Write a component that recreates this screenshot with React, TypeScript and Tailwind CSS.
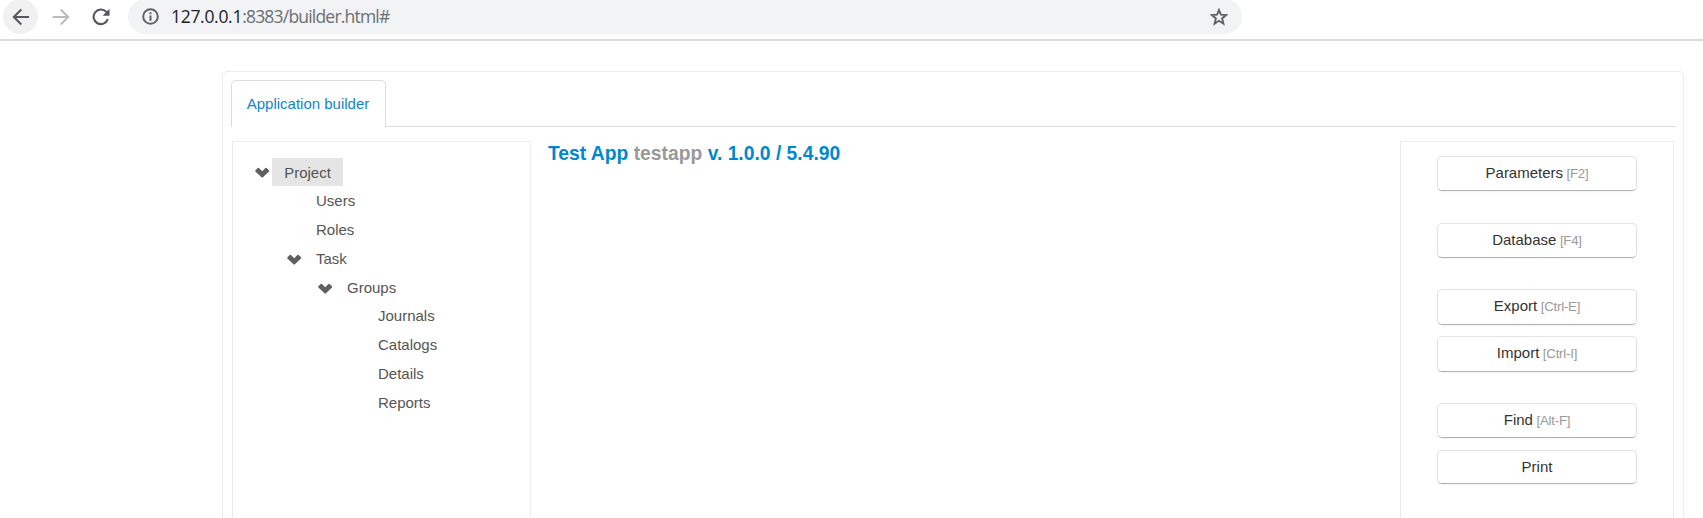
const tree = [
  { label: 'Project', indent: 'pl-[22px]', open: true, selected: true, height: 'h-7' },
  { label: 'Users', indent: 'pl-[54px]', height: 'h-[29px]' },
  { label: 'Roles', indent: 'pl-[54px]', height: 'h-[29px]' },
  { label: 'Task', indent: 'pl-[54px]', open: true, height: 'h-[29px]' },
  { label: 'Groups', indent: 'pl-[85px]', open: true, height: 'h-[29px]' },
  { label: 'Journals', indent: 'pl-[116px]', height: 'h-7 pb-0.5' },
  { label: 'Catalogs', indent: 'pl-[116px]', height: 'h-[29px]' },
  { label: 'Details', indent: 'pl-[116px]', height: 'h-[29px]' },
  { label: 'Reports', indent: 'pl-[116px]', height: 'h-[29px]' },
];

const actions = [
  { label: 'Parameters', keys: '[F2]', box: 'h-[35px]' },
  { label: 'Database', keys: '[F4]', box: 'mt-8 h-[35px]' },
  { label: 'Export', keys: '[Ctrl-E]', box: 'mt-[31px] h-9' },
  { label: 'Import', keys: '[Ctrl-I]', box: 'mt-[11px] h-9' },
  { label: 'Find', keys: '[Alt-F]', box: 'mt-[31px] h-[35px]' },
  { label: 'Print', keys: '', box: 'mt-3 h-[34px]' },
];

function Chevron() {
  return (
    <svg className="h-[11px] w-[15px]" viewBox="0 0 15 11" fill="#5f5f5f">
      <path d="M0.4 3.3L2.8 0.9Q3.4 0.5 4 0.9L7.2 4.2L10.4 0.9Q11 0.5 11.6 0.9L14 3.3Q14.4 3.9 14 4.4L7.9 10.2Q7.2 10.7 6.5 10.2L0.4 4.4Q0 3.9 0.4 3.3Z" />
    </svg>
  );
}

function BrowserBar() {
  return (
    <header className="flex h-[41px] shrink-0 items-start border-b-2 border-[#dadce0] pl-[3px]">
      <div className="-mt-px flex h-[35px] w-[35px] items-center justify-center rounded-full bg-[#f1f1f2]">
        <svg className="size-[18px]" viewBox="0 0 18 18" fill="none" stroke="#54575b" strokeWidth="2">
          <path d="M17 9H2M9.3 1.5L1.8 9L9.3 16.5" />
        </svg>
      </div>
      <svg className="ml-[14px] mt-[8px] size-[18px]" viewBox="0 0 18 18" fill="none" stroke="#babcbe" strokeWidth="2">
        <path d="M0.5 9H16M8.7 1.5L16.2 9L8.7 16.5" />
      </svg>
      <svg className="ml-[22px] mt-[8px] size-[18px]" viewBox="0 0 18 18" fill="none" stroke="#54575b" strokeWidth="2.1">
        <path d="M15.8 11.2A7.3 7.3 0 1 1 14.3 3.9L15.5 5" />
        <path d="M17.5 0.8V7.7H10.6Z" fill="#54575b" stroke="none" />
      </svg>
      <div className="-mt-px ml-[18px] flex h-[35px] w-[1114px] items-center rounded-full bg-[#f1f3f4] pl-[14px] pr-[14px]">
        <svg className="size-[17px]" viewBox="0 0 17 17" fill="none" stroke="#5f6368" strokeWidth="2">
          <circle cx="8.5" cy="8.5" r="7.3" />
          <path d="M8.5 7.5V12.7M8.5 4.3V6.3" />
        </svg>
        <div className="ml-[12px] flex-1 whitespace-nowrap pt-px font-['Open_Sans','Noto_Sans',sans-serif] text-[17.5px] leading-none tracking-[-0.8px] text-[#6b6f74]">
          <span className="tracking-[-0.3px] text-[#202124]">127.0.0.1</span>:8383/builder.html#
        </div>
        <svg className="size-[18px]" viewBox="0 0 18 18" fill="none" stroke="#5f6368" strokeWidth="1.9">
          <path d="M9 2L10.9 6.7L16 7.1L12.1 10.4L13.4 15.7L9 12.8L4.6 15.7L5.9 10.4L2 7.1L7.1 6.7Z" />
        </svg>
      </div>
    </header>
  );
}

export default function App() {
  return (
    <div className="flex h-[518px] flex-col overflow-hidden bg-white font-['Liberation_Sans',Arial,sans-serif] text-[15px]">
      <BrowserBar />
      <main className="ml-[222px] mt-[30px] flex w-[1462px] flex-1 flex-col rounded-t-[5px] border border-b-0 border-[#ececec] pl-2 pr-[7px] pt-2">
        <nav className="flex">
          <div className="flex h-[47px] w-[155px] items-center justify-center rounded-t-[5px] border border-b-0 border-[#dddddd] pr-px pt-px text-[#0f85cc]">
            Application builder
          </div>
          <div className="flex-1 border-b border-[#dddddd]" />
        </nav>
        <div className="mt-[14px] flex flex-1">
          <aside className="ml-px w-[299px] border border-b-0 border-[#ececec] pl-[17px] pt-4 text-[#555555]">
            {tree.map((n) => (
              <div key={n.label} className={`flex items-center ${n.indent} ${n.height}`}>
                {n.open ? (
                  <span className="-ml-[17px] w-[17px] pt-px">
                    <Chevron />
                  </span>
                ) : null}
                <span className={n.selected ? 'flex h-7 w-[71px] items-center justify-center bg-[#e5e5e5] pt-0.5' : 'pl-[12px] pt-0.5'}>
                  {n.label}
                </span>
              </div>
            ))}
          </aside>
          <section className="flex-1 pl-[17px]">
            <h1 className="text-[19.3px] font-bold leading-[25px] text-[#0088cc]">
              Test App <span className="text-[#999999]">testapp</span> v. 1.0.0 / 5.4.90
            </h1>
          </section>
          <aside className="mr-[2px] flex w-[274px] flex-col items-center border border-b-0 border-[#ececec] pt-[14px]">
            {actions.map((a) => (
              <button
                key={a.label}
                className={`w-[200px] shrink-0 rounded-[5px] border border-[#e2e2e2] border-b-[#b0b0b0] bg-white pb-px leading-5 text-[#333333] shadow-[0_1px_2px_rgba(0,0,0,0.05)] ${a.box}`}
              >
                {a.label}
                {a.keys ? <span className="text-[13.2px] tracking-[-0.2px] text-[#999999]"> {a.keys}</span> : null}
              </button>
            ))}
          </aside>
        </div>
      </main>
    </div>
  );
}
